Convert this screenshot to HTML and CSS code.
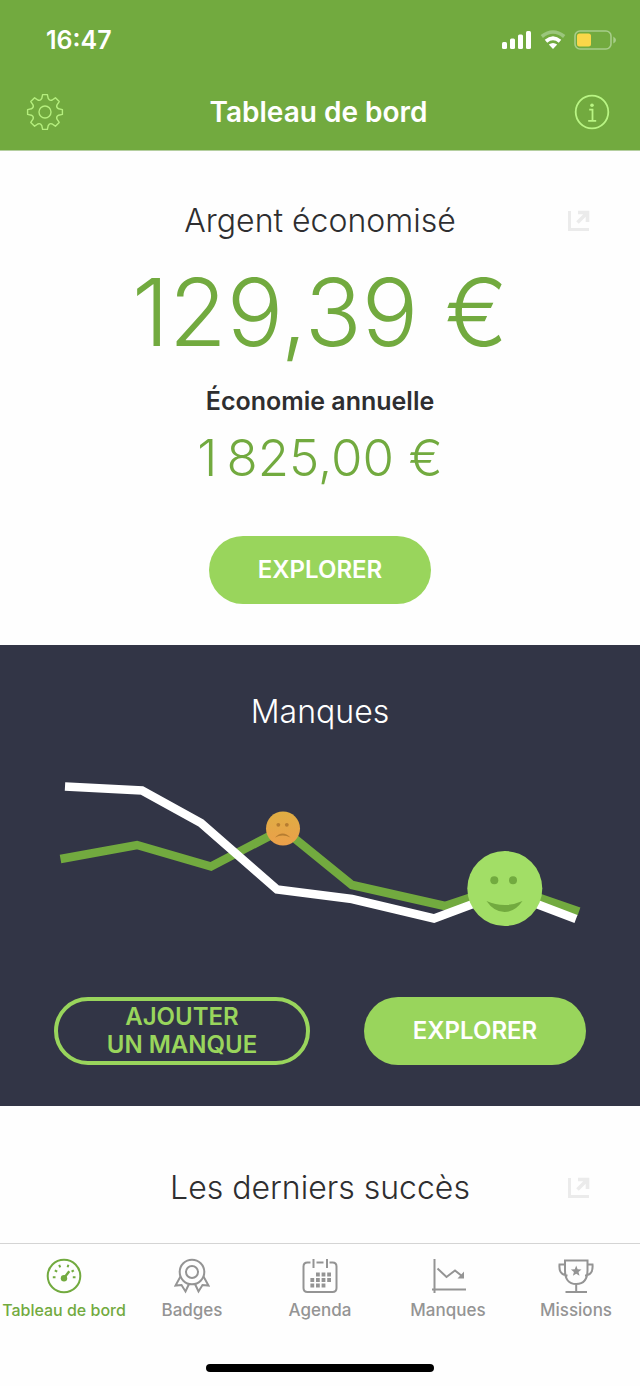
FILE: index.html
```html
<!DOCTYPE html>
<html lang="fr">
<head>
<meta charset="utf-8">
<meta name="viewport" content="width=device-width, initial-scale=1">
<title>Tableau de bord</title>
<link rel="stylesheet" href="styles.css">
</head>
<body>
<div class="app">
  <header class="header">
    <div class="status">
      <span class="status-time">16:47</span>
      <div class="status-icons">
        <svg width="30" height="20" viewBox="0 0 30 20" fill="#fff" aria-hidden="true"><rect x="0" y="12" width="5" height="7" rx="1.500"/><rect x="8" y="8.500" width="5" height="10.500" rx="1.500"/><rect x="16" y="4.500" width="5" height="14.500" rx="1.500"/><rect x="24" y="1" width="5" height="18" rx="1.500"/></svg>
        <svg width="26" height="20" viewBox="0 0 26 20" aria-hidden="true"><path d="M1.800 6.500Q13-2.500 24.200 6.500" fill="none" stroke="#9bc67c" stroke-width="3.600"/><path d="M6 11.300Q13 5.300 20 11.300" fill="none" stroke="#fff" stroke-width="3.800"/><path d="M8.800 14.500Q13 11.500 17.200 14.500L13 19Z" fill="#fff"/></svg>
        <svg width="42" height="20" viewBox="0 0 42 20" aria-hidden="true"><rect x="1" y="1" width="36" height="18" rx="5" fill="none" stroke="#a7cd8a" stroke-width="1.600"/><rect x="3" y="3.500" width="14" height="13" rx="2.500" fill="#fad749"/><path d="M39.300 6.500Q42 8 42 10T39.300 13.500Z" fill="#a7cd8a"/></svg>
      </div>
    </div>
    <div class="nav">
      <button class="icon-button" type="button" aria-label="Réglages">
        <svg width="38" height="38" viewBox="-19 -19 38 38" fill="none" stroke="#b5ee7e" stroke-width="1.400" stroke-linejoin="round" aria-hidden="true"><path d="M-2.400-17.400H2.400L3.200-13.600Q4.700-10.800 7.200-12L10.400-14.200L14.200-10.400L12-7.200Q10.800-4.700 13.600-3.200L17.400-2.400V2.400L13.600 3.200Q10.800 4.700 12 7.200L14.200 10.400L10.400 14.200L7.200 12Q4.700 10.800 3.200 13.600L2.400 17.400H-2.400L-3.200 13.600Q-4.700 10.800-7.200 12L-10.400 14.200L-14.200 10.400L-12 7.200Q-10.800 4.700-13.600 3.200L-17.400 2.400V-2.400L-13.600-3.200Q-10.800-4.700-12-7.200L-14.200-10.400L-10.400-14.200L-7.200-12Q-4.700-10.800-3.200-13.600Z"/><circle r="6"/></svg>
      </button>
      <h1 class="nav-title">Tableau de bord</h1>
      <button class="icon-button" type="button" aria-label="Informations">
        <svg width="38" height="38" viewBox="-19 -19 38 38" fill="none" stroke="#b9f584" stroke-width="1.800" aria-hidden="true"><circle r="16.300"/><path d="M-2.800-2.400H.5V8.800M-3.800 8.800H4.200"/><circle cx="0" cy="-6.800" r="1.800" fill="#b9f584" stroke="none"/></svg>
      </button>
    </div>
  </header>

  <main class="content">
    <section class="card savings">
      <div class="card-head">
        <h2 class="card-title">Argent économisé</h2>
        <button class="share" type="button" aria-label="Partager">
          <svg width="22" height="22" viewBox="0 0 22 22" fill="none" stroke="#ebebeb" stroke-width="3" aria-hidden="true"><path d="M1.500 1V19.500H21"/><path d="M10 2.500H19.500V12M19 3L9.500 12.500" stroke-width="3.600"/></svg>
        </button>
      </div>
      <p class="amount">129,39 €</p>
      <h3 class="subtitle">Économie annuelle</h3>
      <p class="amount-small">1&#8201;825,00 €</p>
      <button class="pill" type="button">EXPLORER</button>
    </section>

    <section class="card cravings">
      <h2 class="card-title">Manques</h2>
      <svg class="chart" viewBox="0 770 640 170" role="img" aria-label="Courbe des manques">
        <g fill="none" stroke-width="8.500">
          <path d="M60.500 859L137 845L211 866.500L283 829L352 885L445 906L505 886L579 911.500" stroke="#72aa3f"/>
          <path d="M65 786.500L142 790.500L201 823L277 889.500L352 899L434 918.500L505 892L576 919" stroke="#fff"/>
        </g>
        <defs><linearGradient id="sad" x2="0" y2="1"><stop stop-color="#dfae43"/><stop offset="1" stop-color="#eb9f4a"/></linearGradient></defs>
        <circle cx="283" cy="828.500" r="17" fill="url(#sad)"/>
        <g fill="#b67d31"><circle cx="278.300" cy="824.800" r="1.900"/><circle cx="286.800" cy="824.800" r="1.900"/><path d="M275 837.500Q282.500 829.500 290.500 837.500Q282.500 833.500 275 837.500Z"/></g>
        <circle cx="504.800" cy="888.500" r="37.500" fill="#a2de66"/>
        <g fill="#72aa3f"><circle cx="494.300" cy="880.300" r="4"/><circle cx="513" cy="880.300" r="4"/><path d="M486.500 901Q504.500 909 522.500 901Q515 912 504.500 912Q494 912 486.500 901Z"/></g>
      </svg>
      <div class="actions">
        <button class="pill pill-outline" type="button">AJOUTER<br>UN MANQUE</button>
        <button class="pill" type="button">EXPLORER</button>
      </div>
    </section>

    <section class="card success">
      <div class="card-head">
        <h2 class="card-title">Les derniers succès</h2>
        <button class="share" type="button" aria-label="Partager">
          <svg width="22" height="22" viewBox="0 0 22 22" fill="none" stroke="#ebebeb" stroke-width="3" aria-hidden="true"><path d="M1.500 1V19.500H21"/><path d="M10 2.500H19.500V12M19 3L9.500 12.500" stroke-width="3.600"/></svg>
        </button>
      </div>
    </section>
  </main>

  <footer class="footer">
    <nav class="tabs">
      <a class="tab tab-active" href="#bord">
        <svg class="tab-icon" viewBox="0 0 36 36" aria-hidden="true"><circle cx="18" cy="18" r="16.300"/><path d="M18 20L23.300 13.200" stroke-width="2.400"/><path d="M6.800 19.200H9.500M26.800 19.200H29.500M8.800 12.300L11.200 13.700M27.800 12.300L25.600 13.700M13.200 6.800L14.200 9.300M22.400 6.800L21.600 9.300"/><circle class="solid" cx="18" cy="20.300" r="3.200"/></svg>
        <span>Tableau de bord</span>
      </a>
      <a class="tab" href="#badges">
        <svg class="tab-icon" viewBox="0 0 36 36" aria-hidden="true"><circle cx="18" cy="14" r="12.300"/><circle cx="18" cy="14" r="6"/><path d="M6.500 18.500L1.500 27.500L7.500 27L11.500 33.500L15 26M29.500 18.500L34.500 27.500L28.500 27L24.500 33.500L21 26"/></svg>
        <span>Badges</span>
      </a>
      <a class="tab" href="#agenda">
        <svg class="tab-icon" viewBox="0 0 36 36" aria-hidden="true"><path d="M8.500 4.500H5.500Q1.500 4.500 1.500 8.500V30Q1.500 34 5.500 34H30.500Q34.500 34 34.500 30V8.500Q34.500 4.500 30.500 4.500H27.500M14.500 4.500H21.500M11.500 1V10M25 1V10"/><path d="M14 16.500H29M8.400 22H29M8.400 27.500H23.500" stroke-width="3.800" stroke-dasharray="3.800 1.800"/></svg>
        <span>Agenda</span>
      </a>
      <a class="tab" href="#manques">
        <svg class="tab-icon" viewBox="0 0 36 36" aria-hidden="true"><path d="M4.500 1V35M2 31.500H36M7.500 10.500L16.500 19L25 12.500L32.500 18.500"/><path class="solid" d="M34 13.500V20.500H27.500Z"/></svg>
        <span>Manques</span>
      </a>
      <a class="tab" href="#missions">
        <svg class="tab-icon" viewBox="0 0 36 36" aria-hidden="true"><path d="M7 2.500H29.500V12Q29.500 26 18.200 26T7 12ZM7 6.500H1.500Q.5 17 9.500 17.500M29.500 6.500H34.500Q35.500 17 27 17.500M18.200 26V34M7.500 34H29"/><path class="solid" d="M18.200 7.500L19.600 11.300L23.500 11.500L20.500 14L21.500 17.800L18.200 15.700L14.900 17.800L15.900 14L12.900 11.500L16.800 11.300Z"/></svg>
        <span>Missions</span>
      </a>
    </nav>
    <div class="home-bar"></div>
  </footer>
</div>
</body>
</html>
```
FILE: styles.css
```css
* {
  box-sizing: border-box;
}

body {
  margin: 0;
  background: #fefefe;
  color: #2e2e30;
  font-family: Inter, "Liberation Sans", sans-serif;
}

h1, h2, h3, p {
  margin: 0;
}

button {
  padding: 0;
  border: 0;
  background: none;
  font: inherit;
  cursor: pointer;
}

svg {
  display: block;
}

.app {
  display: flex;
  flex-direction: column;
  min-height: 100vh;
}

.header {
  background: #72aa3f;
  color: #fff;
  border-bottom: 1px solid #b5cfa0;
}

.status {
  display: flex;
  justify-content: space-between;
  align-items: center;
  padding: 24px 24px 0 46px;
}

.status-time {
  font-size: 25px;
  line-height: 32px;
  font-weight: 600;
}

.status-icons {
  display: flex;
  gap: 8px;
}

.nav {
  display: flex;
  justify-content: space-between;
  align-items: center;
  padding: 37px 29px 19px 26px;
}

.nav-title {
  font-size: 28px;
  line-height: 38px;
  font-weight: 600;
}

.content {
  flex: 1;
}

.card {
  display: flex;
  flex-direction: column;
  align-items: center;
}

.card-head {
  display: grid;
  grid-template-columns: 1fr auto 1fr;
  align-items: center;
  align-self: stretch;
  padding: 0 50px;
}

.card-head .card-title {
  grid-column: 2;
}

.share {
  justify-self: end;
}

.card-title {
  font-size: 32px;
  line-height: 40px;
  font-weight: 300;
}

.savings {
  padding: 50px 0 41px;
}

.amount {
  margin-top: 21px;
  color: #72aa3f;
  font-size: 94px;
  line-height: 100px;
  font-weight: 300;
}

.subtitle {
  margin-top: 23px;
  font-size: 25px;
  line-height: 32px;
  font-weight: 600;
}

.amount-small {
  margin: 11px 0 48px;
  color: #72aa3f;
  font-size: 51px;
  line-height: 60px;
  font-weight: 300;
}

.pill {
  width: 222px;
  height: 68px;
  border-radius: 34px;
  background: #99d55c;
  color: #fff;
  font-size: 24px;
  line-height: 28px;
  font-weight: 600;
}

.pill-outline {
  width: 256px;
  border: 4px solid #99d55c;
  background: none;
  color: #99d55c;
}

.cravings {
  padding: 47px 0 41px;
  background: #323546;
  color: #fff;
}

.chart {
  width: 100%;
  margin: 38px 0 57px;
}

.actions {
  display: flex;
  justify-content: space-between;
  align-self: stretch;
  padding: 0 54px;
}

.success {
  padding: 62px 0 35px;
}

.footer {
  padding: 14px 0;
  border-top: 1px solid #d4d4d4;
}

.tabs {
  display: grid;
  grid-template-columns: repeat(5, minmax(0, 1fr));
}

.tab {
  display: flex;
  flex-direction: column;
  align-items: center;
  gap: 6px;
  color: #949494;
  font-size: 17px;
  line-height: 20px;
  font-weight: 500;
  text-decoration: none;
  white-space: nowrap;
}

.tab-active {
  color: #72aa3f;
  font-size: 16px;
}

.tab-icon {
  width: 36px;
  height: 36px;
  fill: none;
  stroke: currentColor;
  stroke-width: 2;
}

.tab-icon .solid {
  fill: currentColor;
  stroke: none;
}

.home-bar {
  width: 228px;
  height: 8px;
  margin: 44px auto 0;
  border-radius: 4px;
  background: #000;
}
```
